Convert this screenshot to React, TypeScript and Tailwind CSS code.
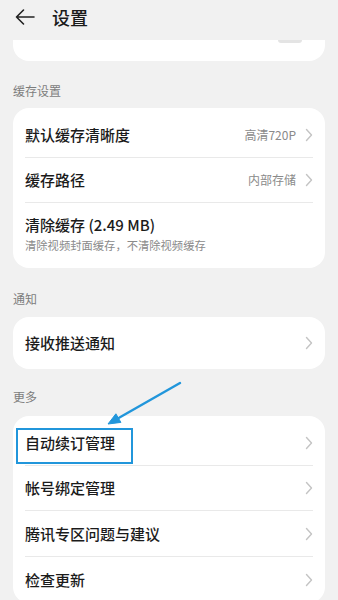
import React from 'react';

const font = { fontFamily: '"Noto Sans CJK SC", "Noto Sans", sans-serif' };

function Chevron() {
  return (
    <svg width="8" height="14" viewBox="0 0 8 14" className="shrink-0">
      <path d="M1.5 1.5 L6.5 7 L1.5 12.5" fill="none" stroke="#c4c4c4" strokeWidth="1.4" strokeLinecap="round" strokeLinejoin="round" />
    </svg>
  );
}

function Row({ title, value, sub, last, h = 'h-[46px]' }: { title: string; value?: string; sub?: string; last?: boolean; h?: string }) {
  return (
    <div className={`mx-3 flex items-center ${h} ${last ? '' : 'border-b border-[#e9e9e9]'}`}>
      <div className="flex-1 min-w-0">
        <div className="text-[15px] leading-[20px] text-[#1b1b1b] font-medium">{title}</div>
        {sub && <div className="mt-[3px] text-[11.3px] leading-[15px] text-[#8a8a8a]">{sub}</div>}
      </div>
      {value && <span className="mr-[9px] text-[12px] text-[#8a8a8a]">{value}</span>}
      {!sub && <Chevron />}
    </div>
  );
}

function Label({ text, pt, pb }: { text: string; pt: string; pb: string }) {
  return <div className={`px-[13px] ${pt} ${pb} text-[12px] leading-[16px] text-[#7d7d7d]`}>{text}</div>;
}

export default function App() {
  return (
    <div className="relative w-[338px] h-[600px] overflow-hidden bg-[#f1f1f1]" style={font}>
      <div className="flex items-start h-[40px] pt-[6px] px-[15px] bg-[#f1f1f1]">
        <svg width="20" height="22" viewBox="0 0 20 22">
          <path d="M19 11 H1.5 M8.5 4 L1.5 11 L8.5 18" fill="none" stroke="#222" strokeWidth="1.6" strokeLinecap="round" strokeLinejoin="round" />
        </svg>
        <span className="ml-[17px] text-[18px] leading-[22px] font-medium text-[#1b1b1b]">设置</span>
      </div>

      <div className="relative mx-[13px] h-[21px] bg-white rounded-b-2xl">
        <div className="absolute right-[23px] top-0 w-[24px] h-[3px] rounded-b-full bg-[#e4e4e4]" />
      </div>

      <Label text="缓存设置" pt="pt-[22px]" pb="pb-[9px]" />
      <div className="mx-[13px] bg-white rounded-2xl py-[4px]">
        <Row title="默认缓存清晰度" value="高清720P" />
        <Row title="缓存路径" value="内部存储" h="h-[45px]" />
        <Row title="清除缓存 (2.49 MB)" sub="清除视频封面缓存，不清除视频缓存" last h="h-[61px]" />
      </div>

      <Label text="通知" pt="pt-[23px]" pb="pb-[10px]" />
      <div className="mx-[13px] bg-white rounded-2xl py-[4px]">
        <Row title="接收推送通知" last h="h-[44px]" />
      </div>

      <Label text="更多" pt="pt-[20px]" pb="pb-[11px]" />
      <div className="mx-[13px] bg-white rounded-2xl pt-[4px]">
        <Row title="自动续订管理" />
        <Row title="帐号绑定管理" h="h-[45px]" />
        <Row title="腾讯专区问题与建议" />
        <Row title="检查更新" last />
      </div>

      <div className="absolute left-[16px] top-[428px] w-[117px] h-[36px] border-2 border-[#2196db]" />
      <svg className="absolute left-0 top-0" width="338" height="600" viewBox="0 0 338 600">
        <path d="M180 383 L116 419.5" stroke="#2196db" strokeWidth="2.4" strokeLinecap="round" />
        <path d="M108 424 L115.9 413.8 L120.9 422.4 Z" fill="#2196db" stroke="#2196db" strokeWidth="1" strokeLinejoin="round" />
      </svg>
    </div>
  );
}
